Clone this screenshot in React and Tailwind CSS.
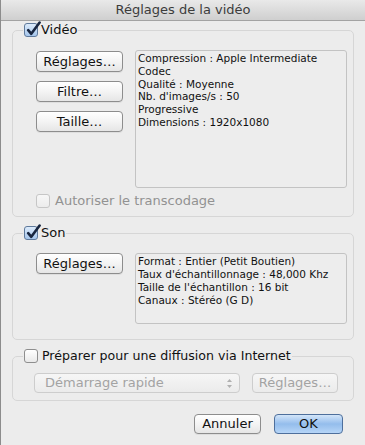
import React from "react";

const FONT = { fontFamily: '"DejaVu Sans", "Noto Sans", sans-serif' };

function Check({ checked = false, disabled = false }) {
  return (
    <span
      className={
        "relative inline-block shrink-0 w-[14px] h-[14px] rounded-[3px] border " +
        (checked
          ? "border-[#5f7a9c] bg-gradient-to-b from-[#dcebfb] to-[#a6c6ec]"
          : disabled
          ? "border-[#c6c6c6] bg-gradient-to-b from-[#f7f7f7] to-[#ececec]"
          : "border-[#8e8e8e] bg-gradient-to-b from-[#ffffff] to-[#e9e9e9]")
      }
    >
      {checked && (
        <svg
          className="absolute left-[1px] top-[-3px] w-[15px] h-[16px]"
          viewBox="0 0 15 16"
          fill="none"
        >
          <path
            d="M2.2 9.2 L5.3 12.8 L13.6 1.6"
            stroke="#182640"
            strokeWidth="2.6"
            strokeLinecap="round"
            strokeLinejoin="round"
          />
        </svg>
      )}
    </span>
  );
}

function Btn({ children, className = "", disabled = false }) {
  return (
    <div
      className={
        "flex items-center justify-center rounded-[4px] border text-[13px] " +
        (disabled
          ? "border-[#cdcdcd] text-[#a3a3a3] bg-gradient-to-b from-[#f6f6f6] to-[#ebebeb] "
          : "border-[#8d8d8d] text-[#111] bg-gradient-to-b from-[#ffffff] via-[#f4f4f4] to-[#e6e6e6] shadow-[0_1px_0_rgba(0,0,0,0.06)] ") +
        className
      }
    >
      {children}
    </div>
  );
}

export default function App() {
  return (
    <div
      className="w-[365px] h-[445px] bg-[#ececec] overflow-hidden border-l border-[#8c8c8c] text-[#111]"
      style={FONT}
    >
      {/* Title bar */}
      <div className="h-[21px] border-b border-[#a3a3a3] bg-gradient-to-b from-[#e9e9e9] to-[#cfcfcf] flex items-center justify-center text-[13px] text-[#3c3c3c]">
        Réglages de la vidéo
      </div>

      {/* Vidéo */}
      <fieldset className="mx-[11px] mt-[1px] p-0 border border-[#d6d6d6] rounded-[5px]">
        <legend className="ml-[10px] px-[1px] h-[16px] flex items-center gap-[3px] text-[13px]">
          <Check checked />
          <span>Vidéo</span>
        </legend>
        <div className="pl-[23px] pr-[5px] pt-[12px] pb-[8px]">
          <div className="flex gap-[12px]">
            <div className="w-[87px] pt-[1px] flex flex-col gap-[9px]">
              <Btn className="h-[21px]">Réglages…</Btn>
              <Btn className="h-[21px]">Filtre…</Btn>
              <Btn className="h-[21px]">Taille…</Btn>
            </div>
            <div className="w-[212px] h-[138px] border border-[#c3c3c3] rounded-[3px] bg-[#ededed] px-[2px] pt-[1px] text-[10.5px] leading-[12.8px]">
              <div>Compression : Apple Intermediate</div>
              <div>Codec</div>
              <div>Qualité : Moyenne</div>
              <div>Nb. d'images/s : 50</div>
              <div>Progressive</div>
              <div>Dimensions : 1920x1080</div>
            </div>
          </div>
          <div className="mt-[6px] flex items-center gap-[5px] h-[14px] text-[13px] text-[#929292]">
            <Check disabled />
            <span>Autoriser le transcodage</span>
          </div>
        </div>
      </fieldset>

      {/* Son */}
      <fieldset className="mx-[11px] mt-[8px] p-0 border border-[#d6d6d6] rounded-[5px]">
        <legend className="ml-[10px] px-[1px] h-[16px] flex items-center gap-[3px] text-[13px]">
          <Check checked />
          <span>Son</span>
        </legend>
        <div className="pl-[23px] pr-[5px] pt-[12px] pb-[15px]">
          <div className="flex gap-[12px]">
            <div className="w-[87px]">
              <Btn className="h-[21px]">Réglages…</Btn>
            </div>
            <div className="w-[212px] h-[71px] border border-[#c3c3c3] rounded-[3px] bg-[#ededed] px-[2px] pt-[1px] text-[10.5px] leading-[13px]">
              <div>Format : Entier (Petit Boutien)</div>
              <div>Taux d'échantillonnage : 48,000 Khz</div>
              <div>Taille de l'échantillon : 16 bit</div>
              <div>Canaux : Stéréo (G D)</div>
            </div>
          </div>
        </div>
      </fieldset>

      {/* Internet */}
      <fieldset className="mx-[11px] mt-[8px] p-0 border border-[#d6d6d6] rounded-[5px]">
        <legend className="ml-[10px] px-[1px] h-[16px] flex items-center gap-[4px] text-[12.6px]">
          <Check />
          <span>Préparer pour une diffusion via Internet</span>
        </legend>
        <div className="pl-[21px] pr-[14px] pt-[9px] pb-[7px]">
          <div className="flex gap-[12px]">
            <div className="w-[206px] h-[20px] rounded-[4px] border border-[#cdcdcd] bg-gradient-to-b from-[#f6f6f6] to-[#ebebeb] flex items-center justify-between pl-[10px] pr-[6px] text-[13px] text-[#a3a3a3]">
              <span>Démarrage rapide</span>
              <svg width="7" height="11" viewBox="0 0 7 11">
                <path d="M3.5 1 L6 4 L1 4 Z" fill="#b0b0b0" />
                <path d="M3.5 10 L6 7 L1 7 Z" fill="#b0b0b0" />
              </svg>
            </div>
            <Btn disabled className="w-[86px] h-[20px]">
              Réglages…
            </Btn>
          </div>
        </div>
      </fieldset>

      {/* Bottom buttons */}
      <div className="mt-[13px] flex justify-end gap-[13px] pr-[22px]">
        <Btn className="w-[67px] h-[20px]">Annuler</Btn>
        <div className="w-[69px] h-[20px] rounded-[4px] border border-[#4e6f9c] bg-gradient-to-b from-[#d3e5f9] via-[#94bdec] to-[#b6d5f7] flex items-center justify-center text-[13px] text-[#111]">
          OK
        </div>
      </div>
    </div>
  );
}
